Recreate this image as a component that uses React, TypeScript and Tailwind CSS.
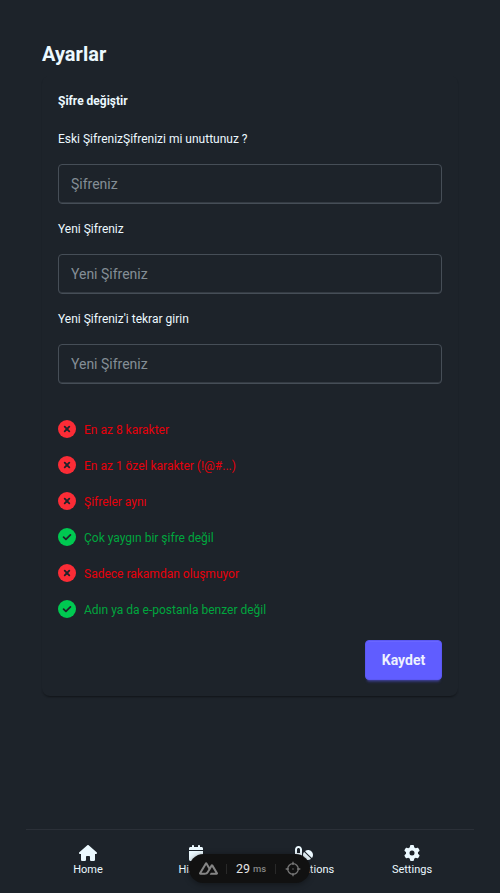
import React from "react";
import { FaCalendar, FaGear, FaHouse, FaPills } from "react-icons/fa6";

const rules = [
  { text: "En az 8 karakter", ok: false },
  { text: "En az 1 özel karakter (!@#...)", ok: false },
  { text: "Şifreler aynı", ok: false },
  { text: "Çok yaygın bir şifre değil", ok: true },
  { text: "Sadece rakamdan oluşmuyor", ok: false },
  { text: "Adın ya da e-postanla benzer değil", ok: true },
];

const tabs = [
  { label: "Home", Icon: FaHouse },
  { label: "History", Icon: FaCalendar },
  { label: "Medications", Icon: FaPills },
  { label: "Settings", Icon: FaGear },
];

function Field({ label, placeholder }: { label: string; placeholder: string }) {
  return (
    <label className="flex h-[90px] flex-col">
      <span className="h-[34px] pt-px text-xs leading-4">{label}</span>
      <input
        type="password"
        placeholder={placeholder}
        className="h-10 w-full rounded border border-[#464e57] bg-[#1d232a] px-3 text-sm shadow-[inset_0_-1px_#343b43] outline-none placeholder:text-[#848e96]"
      />
    </label>
  );
}

function StatusIcon({ ok }: { ok: boolean }) {
  return (
    <svg className="size-[18px] shrink-0" viewBox="0 0 18 18" fill="none" strokeLinecap="round" strokeLinejoin="round">
      <circle cx="9" cy="9" r="9" fill={ok ? "#00c951" : "#fb2c36"} />
      <path d={ok ? "M5.6 9.2 7.9 11.3 12.4 6.9" : "M6.7 6.7 11.3 11.3M11.3 6.7 6.7 11.3"} stroke="#1d232a" strokeWidth="1.8" />
    </svg>
  );
}

function DevPill() {
  return (
    <div className="absolute bottom-[10px] left-[189px] flex h-[29px] w-[121px] items-center rounded-full bg-[#111111] pl-[10px] shadow-[0_1px_6px_rgba(0,0,0,0.4)]">
      <svg width="19" height="19" viewBox="0 0 24 24" fill="#858585">
        <path d="M13.464 19.83h8.922c.283 0 .562-.073.807-.21a1.59 1.59 0 0 0 .591-.573 1.53 1.53 0 0 0 .216-.783 1.53 1.53 0 0 0-.217-.783L17.792 7.414a1.59 1.59 0 0 0-.591-.573 1.65 1.65 0 0 0-.807-.21c-.283 0-.562.073-.807.21a1.59 1.59 0 0 0-.591.573L13.464 9.99l-2.995-5.037a1.59 1.59 0 0 0-.591-.573 1.65 1.65 0 0 0-.807-.21c-.284 0-.562.073-.808.21a1.59 1.59 0 0 0-.591.573L.217 17.481A1.53 1.53 0 0 0 0 18.264c0 .274.074.545.216.783a1.59 1.59 0 0 0 .591.573c.245.137.524.21.807.21h5.6c2.219 0 3.855-.938 4.981-2.768l2.734-4.546 1.464-2.433 4.395 7.309h-5.859zm-6.341-2.437H3.214l5.859-9.743 2.923 4.871-1.957 3.256c-.748 1.186-1.598 1.616-2.916 1.616z" />
      </svg>
      <span className="ml-[8px] h-[10px] w-px bg-[#292929]" />
      <span className="ml-[9px] text-[12.5px] leading-4 text-[#e4e4e4]">29</span>
      <span className="ml-[3px] text-[9.5px] leading-4 font-medium text-[#858585]">ms</span>
      <span className="ml-[9px] h-[10px] w-px bg-[#292929]" />
      <svg className="ml-[9px]" width="16" height="16" viewBox="0 0 16 16" fill="none" stroke="#777777" strokeWidth="1.3">
        <circle cx="8" cy="8" r="5.3" />
        <path d="M8 .7v3.2M8 12.1v3.2M.7 8h3.2M12.1 8h3.2" />
        <circle cx="8" cy="8" r=".7" fill="#777777" stroke="none" />
      </svg>
    </div>
  );
}

export default function App() {
  return (
    <div className="relative flex h-[893px] w-[500px] flex-col overflow-hidden bg-[#1d232a] font-['Roboto','Liberation_Sans',sans-serif] text-[#ecf9ff]">
      <main className="flex-1 px-[42px] pt-10">
        <h1 className="text-xl leading-7 font-bold">Ayarlar</h1>
        <section className="mt-2 h-[620px] rounded-lg px-4 pt-[17px] shadow-[0_2px_2px_-1px_rgba(0,0,0,0.4),0_1px_2px_rgba(0,0,0,0.05)]">
          <h2 className="mb-[21px] text-xs leading-4 font-bold">Şifre değiştir</h2>
          <form>
            <Field label="Eski ŞifrenizŞifrenizi mi unuttunuz ?" placeholder="Şifreniz" />
            <Field label="Yeni Şifreniz" placeholder="Yeni Şifreniz" />
            <Field label="Yeni Şifreniz'i tekrar girin" placeholder="Yeni Şifreniz" />
            <ul className="mt-5 flex flex-col gap-[18px]">
              {rules.map(({ text, ok }) => (
                <li key={text} className="flex h-[18px] items-center gap-2">
                  <StatusIcon ok={ok} />
                  <span className={ok ? "pt-px text-xs leading-4 text-[#00a63e]" : "pt-px text-xs leading-4 text-[#e7000b]"}>{text}</span>
                </li>
              ))}
            </ul>
            <div className="mt-[22px] flex justify-end">
              <button
                type="button"
                className="h-10 w-[77px] rounded border border-[#5b58f2] bg-[#605dff] text-sm font-bold text-[#edf1fe] shadow-[inset_0_1px_rgba(255,255,255,0.06),0_3px_2px_-2px_rgba(96,93,255,0.3),0_4px_3px_-2px_rgba(96,93,255,0.3)]"
              >
                Kaydet
              </button>
            </div>
          </form>
        </section>
      </main>
      <nav className="mx-[26px] grid h-16 grid-cols-4 border-t border-[#2b3038] px-2">
        {tabs.map(({ label, Icon }) => (
          <a key={label} className="flex flex-col items-center pt-[15px]">
            <Icon className={label === "Home" || label === "Medications" ? "h-4 w-[18px]" : "size-4"} />
            <span className="mt-px text-[11px] leading-4">{label}</span>
          </a>
        ))}
      </nav>
      <DevPill />
    </div>
  );
}
